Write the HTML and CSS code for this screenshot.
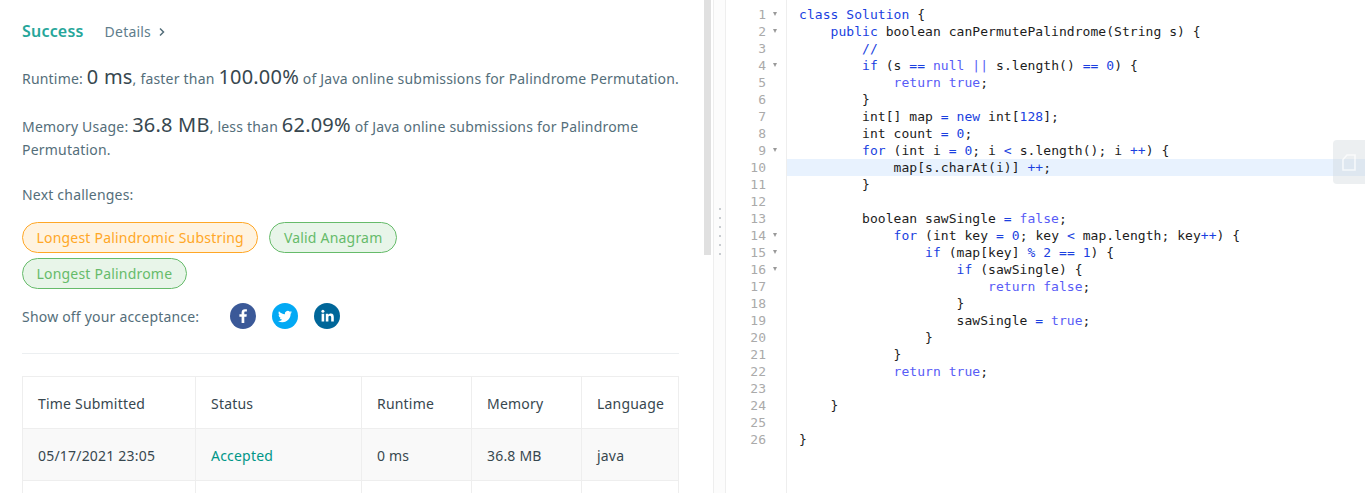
FILE: index.html
```html
<!DOCTYPE html>
<html lang="en">
<head>
  <meta charset="UTF-8">
  <title>Submission Detail</title>
  <link rel="stylesheet" href="styles.css">
</head>
<body>
  <div class="page">
    <div class="result">
      <div class="result-head">
        <span class="success">Success</span>
        <span class="details">Details</span>
        <svg class="chevron" width="8" height="10" viewBox="0 0 8 10"><path d="M2 1.5 5.5 5 2 8.5" fill="none" stroke="#546e7a" stroke-width="1.5"/></svg>
      </div>
      <p class="stat">Runtime: <span class="big">0 ms</span>, faster than <span class="big">100.00%</span> of Java online submissions for Palindrome Permutation.</p>
      <p class="stat memory">Memory Usage: <span class="big">36.8 MB</span>, less than <span class="big">62.09%</span> of Java online submissions for Palindrome<br>Permutation.</p>
      <p class="next">Next challenges:</p>
      <div class="pills">
        <span class="pill medium">Longest Palindromic Substring</span>
        <span class="pill easy">Valid Anagram</span>
        <span class="pill easy">Longest Palindrome</span>
      </div>
      <div class="share">
        <span class="share-label">Show off your acceptance:</span>
        <svg class="social" width="26" height="26" viewBox="0 0 26 26"><circle cx="13" cy="13" r="13" fill="#3b5998"/><path d="M14.3 20v-6.3h2.2l.3-2.5h-2.5V9.7c0-.7.2-1.2 1.2-1.2h1.4V6.3c-.3 0-1-.1-2-.1-2 0-3.300 1.200-3.300 3.400v1.600H9.400v2.500h2.200V20z" fill="#fff"/></svg>
        <svg class="social" width="26" height="26" viewBox="0 0 26 26"><circle cx="13" cy="13" r="13" fill="#03a9f4"/><g transform="translate(6 6.500) scale(.585)"><path d="M23.953 4.570a10 10 0 01-2.825.775 4.958 4.958 0 002.163-2.723c-.951.555-2.005.959-3.127 1.184a4.920 4.920 0 00-8.384 4.482C7.690 8.095 4.067 6.130 1.640 3.162a4.822 4.822 0 00-.666 2.475c0 1.710.870 3.213 2.188 4.096a4.904 4.904 0 01-2.228-.616v.060a4.923 4.923 0 003.946 4.827 4.996 4.996 0 01-2.212.085 4.936 4.936 0 004.604 3.417 9.867 9.867 0 01-6.102 2.105c-.390 0-.779-.023-1.170-.067a13.995 13.995 0 007.557 2.209c9.053 0 13.998-7.496 13.998-13.985 0-.210 0-.420-.015-.630A9.935 9.935 0 0024 4.590z" fill="#fff"/></g></svg>
        <svg class="social" width="26" height="26" viewBox="0 0 26 26"><circle cx="13" cy="13" r="13" fill="#006699"/><circle cx="8.900" cy="8.300" r="1.500" fill="#fff"/><path d="M7.600 10.800h2.600V18.500H7.600zM11.800 10.800h2.500v1.100c.4-.7 1.300-1.300 2.500-1.300 2.400 0 3 1.500 3 3.700v4.200h-2.600v-3.700c0-1-.1-2-1.300-2-1.200 0-1.500 .9-1.500 1.900v3.800h-2.600z" fill="#fff"/></svg>
      </div>
      <hr class="rule">
      <table class="submissions">
        <tr><th class="c-time">Time Submitted</th><th class="c-status">Status</th><th class="c-run">Runtime</th><th class="c-mem">Memory</th><th>Language</th></tr>
        <tr class="odd"><td>05/17/2021 23:05</td><td class="accepted">Accepted</td><td>0 ms</td><td>36.8 MB</td><td>java</td></tr>
        <tr><td>&nbsp;</td><td></td><td></td><td></td><td></td></tr>
      </table>
    </div>
    <div class="scrolltrack"><div class="scrollthumb"></div></div>
    <div class="splitter">
      <div class="grip"><i></i><i></i><i></i><i></i><i></i><i></i></div>
    </div>
    <div class="editor">
      <div class="gutter" id="gutter"></div>
<pre class="code"><div class="ln"><b>class</b> <b>Solution</b> <u>{</u></div><div class="ln">    <b>public</b> boolean canPermutePalindrome(String s) <u>{</u></div><div class="ln">        <b>//</b></div><div class="ln">        <b>if</b> (s <b>==</b> <em>null</em> <em>||</em> s.length() <b>==</b> <b>0</b>) <u>{</u></div><div class="ln">            <em>return</em> <em>true</em>;</div><div class="ln">        <u>}</u></div><div class="ln">        int[] map <b>=</b> <b>new</b> int[<b>128</b>];</div><div class="ln">        int count <b>=</b> <b>0</b>;</div><div class="ln">        <b>for</b> (int i <b>=</b> <b>0</b>; i <b>&lt;</b> s.length(); i <b>++</b>) <u>{</u></div><div class="ln active">            map[s.charAt(i)] <b>++</b>;</div><div class="ln">        <u>}</u></div><div class="ln"> </div><div class="ln">        boolean sawSingle <b>=</b> <em>false</em>;</div><div class="ln">            <b>for</b> (int key <b>=</b> <b>0</b>; key <b>&lt;</b> map.length; key<b>++</b>) <u>{</u></div><div class="ln">                <b>if</b> (map[key] <b>%</b> <b>2</b> <b>==</b> <b>1</b>) <u>{</u></div><div class="ln">                    <b>if</b> (sawSingle) <u>{</u></div><div class="ln">                        <em>return</em> <em>false</em>;</div><div class="ln">                    <u>}</u></div><div class="ln">                    sawSingle <b>=</b> <em>true</em>;</div><div class="ln">                <u>}</u></div><div class="ln">            <u>}</u></div><div class="ln">            <em>return</em> <em>true</em>;</div><div class="ln"> </div><div class="ln">    <u>}</u></div><div class="ln"> </div><div class="ln"><u>}</u></div></pre>
      <div class="copy">
        <svg width="16" height="19" viewBox="0 0 16 19"><path d="M6 2h8v15H2V6.500z" fill="none" stroke="#fff" stroke-opacity=".7" stroke-width="1.600"/></svg>
      </div>
    </div>
  </div>
  <script>
    const gutter = document.getElementById("gutter");
    const foldable = [1, 2, 4, 9, 14, 15, 16];
    for (let i = 1; i <= 26; i++) {
      const row = document.createElement("div");
      row.className = "gutter-row";
      row.textContent = i;
      if (foldable.includes(i)) row.classList.add("fold");
      gutter.appendChild(row);
    }
  </script>
</body>
</html>
```

FILE: styles.css
```css
* {
  box-sizing: border-box;
}

html, body {
  margin: 0;
  height: 493px;
  overflow: hidden;
  background-color: #fff;
}

body {
  font-family: "Noto Sans", "Open Sans", sans-serif;
  font-size: 14px;
  letter-spacing: .2px;
  color: #546e7a;
}

.page {
  display: flex;
  height: 493px;
}

/* left panel */
.result {
  width: 704px;
  flex: none;
  padding: 19px 25px 0 22px;
  overflow: hidden;
}

.result-head {
  display: flex;
  align-items: center;
  height: 23px;
}

.success {
  font-size: 16px;
  font-weight: 600;
  color: #26a69a;
}

.details {
  margin-left: 21px;
  margin-top: 2px;
  color: #607d8b;
}

.chevron {
  margin-left: 7px;
  margin-top: 3px;
}

.stat {
  margin: 23px 0 0;
  line-height: 23px;
}

.stat.memory {
  margin-top: 23px;
}

.big {
  font-size: 20px;
  color: #37474f;
}

.next {
  margin: 22px 0 0;
  line-height: 23px;
}

.pills {
  display: flex;
  flex-wrap: wrap;
  gap: 5px 11px;
  max-width: 400px;
  margin-top: 16px;
}

.pill {
  height: 31px;
  padding: 0 13.5px;
  line-height: 29px;
  border: 1px solid;
  border-radius: 16px;
}

.pill.medium {
  color: #ffa726;
  background-color: #fff3e0;
  border-color: #ffa726;
}

.pill.easy {
  color: #66bb6a;
  background-color: #e8f5e9;
  border-color: #66bb6a;
}

.share {
  display: flex;
  align-items: center;
  margin-top: 14px;
  height: 26px;
}

.share-label {
  width: 208px;
}

.social {
  margin-right: 16px;
}

.rule {
  margin: 24px 0 0;
  border: none;
  border-top: 1px solid #eceff1;
}

.submissions {
  width: 657px;
  margin-top: 22px;
  border-collapse: collapse;
  table-layout: fixed;
  color: #37474f;
}

.submissions th,
.submissions td {
  height: 52px;
  padding: 2px 15px 0;
  border: 1px solid #eee;
  font-weight: 400;
  text-align: left;
}

.c-time { width: 173px; }
.c-status { width: 166px; }
.c-run { width: 110px; }
.c-mem { width: 110px; }

.odd {
  background-color: #f9f9f9;
}

.submissions .accepted {
  color: #009688;
}

/* scrollbar + splitter */
.scrolltrack {
  width: 9px;
  flex: none;
}

.scrollthumb {
  width: 7px;
  height: 255px;
  background-color: #e0e0e0;
}

.splitter {
  width: 13px;
  flex: none;
  border-left: 1px solid #eee;
  border-right: 1px solid #eee;
  background-color: #fcfcfc;
  display: flex;
  flex-direction: column;
  align-items: center;
  padding-top: 208px;
}

.grip i {
  display: block;
  width: 2px;
  height: 2px;
  margin-bottom: 7px;
  background-color: #c8ccd0;
}

/* code editor */
.editor {
  flex: 1;
  position: relative;
  display: flex;
  padding-top: 6px;
  overflow: hidden;
  letter-spacing: 0;
}

.gutter {
  width: 61px;
  flex: none;
  font-family: "DejaVu Sans Mono", monospace;
  font-size: 13px;
  line-height: 17px;
  color: #aaa;
  border-right: 1px solid #eee;
  margin-top: -6px;
  padding-top: 6px;
  height: 493px;
}

.gutter-row {
  position: relative;
  height: 17px;
  padding-right: 20px;
  text-align: right;
}

.gutter-row.fold::after {
  content: "";
  position: absolute;
  right: 9px;
  top: 6px;
  border-left: 2.5px solid transparent;
  border-right: 2.5px solid transparent;
  border-top: 4px solid #999;
}

.code {
  flex: 1;
  margin: 0;
  font-family: "DejaVu Sans Mono", monospace;
  font-size: 13px;
  line-height: 17px;
  letter-spacing: .05px;
  color: #1c1c1c;
}

.ln {
  height: 17px;
  padding-left: 12px;
  white-space: pre;
}

.ln.active {
  background-color: #e8f2fe;
}

.code b {
  font-weight: 400;
  color: #1a3fe0;
}

.code em {
  font-style: normal;
  color: #585cf6;
}

.code u {
  text-decoration: none;
  color: #222;
}

.copy {
  position: absolute;
  right: 0;
  top: 140px;
  width: 32px;
  height: 44px;
  display: flex;
  align-items: center;
  justify-content: center;
  background-color: rgba(207, 216, 220, .4);
  border-radius: 4px 0 0 4px;
}
```
